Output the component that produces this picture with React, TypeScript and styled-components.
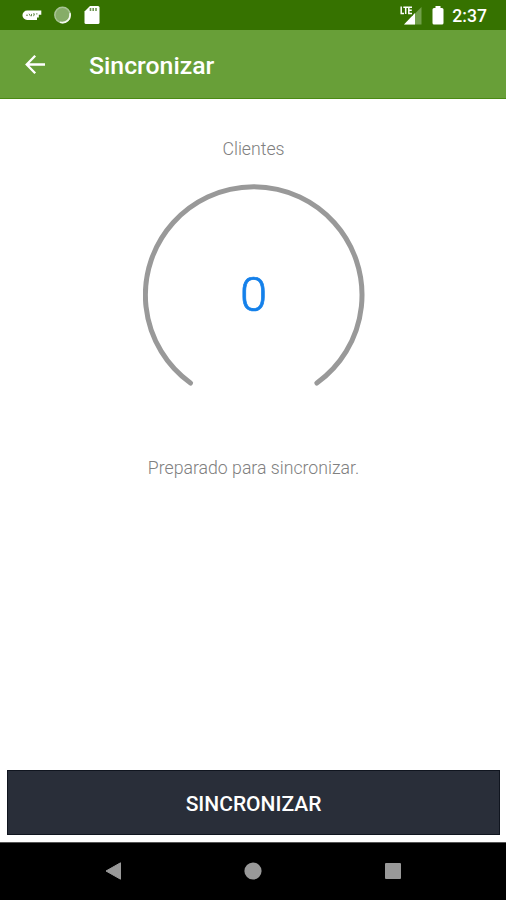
import React from "react";
import styled, { createGlobalStyle } from "styled-components";

const GlobalStyle = createGlobalStyle`
  *, *::before, *::after { box-sizing: border-box; }
  body { margin: 0; background: #fff; font-family: Roboto, "Liberation Sans", sans-serif; }
`;

const Screen = styled.div`
  display: flex;
  flex-direction: column;
  width: 506px;
  height: 900px;
  overflow: hidden;
  background: #fff;
`;

const StatusBar = styled.header`
  display: flex;
  align-items: center;
  justify-content: space-between;
  flex: none;
  height: 30px;
  padding: 0 19px 0 22px;
  background: #367200;
  color: #fff;
`;

const StatusGroup = styled.div<{ $gap: number }>`
  display: flex;
  align-items: center;
  gap: ${(p) => p.$gap}px;
`;

const Clock = styled.span`
  margin-left: -2px;
  padding-top: 2px;
  font-size: 17.6px;
  font-weight: 500;
  line-height: 28px;
`;

const AppBar = styled.div`
  display: flex;
  align-items: center;
  flex: none;
  height: 69px;
  padding: 0 24px;
  gap: 43px;
  background: #689f38;
  border-bottom: 1px solid #4a8a14;
  color: #fff;
`;

const BackButton = styled.button`
  display: flex;
  padding: 0;
  border: 0;
  background: none;
  color: inherit;
`;

const Title = styled.h1`
  margin: 4px 0 0;
  font-size: 24.8px;
  font-weight: 500;
  line-height: 28px;
`;

const Content = styled.main`
  display: flex;
  flex-direction: column;
  align-items: center;
  flex: 1;
  padding: 39px 6px 7px 7px;
`;

const Label = styled.p`
  margin: 0;
  color: #808080;
  font-size: 17.7px;
  font-weight: 300;
  line-height: 22px;
`;

const Gauge = styled.div`
  display: grid;
  place-items: center;
  width: 222px;
  height: 222px;
  margin: 24px 0 51px;
  > * { grid-area: 1 / 1; }
`;

const Count = styled.span`
  color: #1480ea;
  font-size: 49px;
  font-weight: 300;
  line-height: 56px;
  -webkit-text-stroke: 0.7px currentColor;
`;

const SyncButton = styled.button`
  width: 100%;
  height: 65px;
  margin-top: auto;
  padding: 2px 0 0;
  border: 1px solid #10151f;
  background: #292e39;
  color: #fff;
  font: 500 21px Roboto, "Liberation Sans", sans-serif;
`;

const NavBar = styled.nav`
  display: grid;
  grid-template-columns: repeat(3, 140px);
  justify-content: center;
  align-items: center;
  justify-items: center;
  flex: none;
  height: 58px;
  padding-bottom: 2px;
  border-top: 1px solid #555;
  background: #000;
`;

const KeyIcon = () => (
  <svg width="20" height="16" viewBox="0 0 20 16">
    <path d="M5.2 3.5H19.3V7.8H16.8V10.5H15V13H5.2A4.7 4.7 0 0 1 5.2 3.5Z" fill="#fff" />
    <path d="M4 8.2H6M7 6.7L8.5 9.2M9.5 6.9V9.2M11 6.9H12.5L11.5 9.2M14 6.9H15.5" stroke="#6a8e50" strokeWidth="1" fill="none" />
  </svg>
);

const SpinnerIcon = () => (
  <svg width="18" height="18" viewBox="0 0 18 18">
    <circle cx="8.5" cy="9" r="7.7" fill="#86ad68" stroke="#a8c495" strokeWidth="1.5" />
    <path d="M15.9 7.2A7.7 7.7 0 0 1 6 16.2" fill="none" stroke="#f5faf0" strokeWidth="1.7" />
  </svg>
);

const CardIcon = () => (
  <svg width="16" height="20" viewBox="0 0 16 20">
    <path d="M6 1H14Q15.5 1 15.5 2.5V17.5Q15.5 19 14 19H2Q.5 19 .5 17.5V6.5Z" fill="#fff" />
    <path d="M6.5 3V6M9.2 3V6M12 3V6" stroke="#6d9550" strokeWidth="1.6" />
  </svg>
);

const SignalIcon = () => (
  <svg width="23" height="20" viewBox="0 0 23 20">
    <path d="M22.5 2V19.5H5Z" fill="#72a04b" />
    <path d="M16 8V19.5H5Z" fill="#fff" />
    <path d="M0 0H13.5V11H0Z" fill="#367200" />
    <path d="M2.2 1.5V8.5H5M4.3 2.2H9M6.7 2.2V9.1M13 2.2H9.8V8.5H13M9.8 5.3H12.8" fill="none" stroke="#fff" strokeWidth="1.5" />
  </svg>
);

const BatteryIcon = () => (
  <svg width="12" height="20" viewBox="0 0 12 20">
    <path d="M3.5 1H8.5V3H10Q11.5 3 11.5 4.5V18Q11.5 19.5 10 19.5H2Q.5 19.5 .5 18V4.5Q.5 3 2 3H3.5Z" fill="#fff" />
  </svg>
);

export default function App() {
  return (
    <Screen>
      <GlobalStyle />
      <StatusBar>
        <StatusGroup $gap={12}>
          <KeyIcon />
          <SpinnerIcon />
          <CardIcon />
        </StatusGroup>
        <StatusGroup $gap={10}>
          <SignalIcon />
          <BatteryIcon />
          <Clock>2:37</Clock>
        </StatusGroup>
      </StatusBar>
      <AppBar>
        <BackButton aria-label="Volver">
          <svg width="22" height="22" viewBox="0 0 22 22" fill="none" stroke="currentColor" strokeWidth="2.3">
            <path d="M21 11.5H3M11.2 2.7L2.7 11.5L11.2 20.3" />
          </svg>
        </BackButton>
        <Title>Sincronizar</Title>
      </AppBar>
      <Content>
        <Label>Clientes</Label>
        <Gauge>
          <svg width="222" height="222" viewBox="0 0 222 222">
            <path d="M47.5 199A108.3 108.3 0 1 1 173.9 199" fill="none" stroke="#999" strokeWidth="5" strokeLinecap="round" />
          </svg>
          <Count>0</Count>
        </Gauge>
        <Label>Preparado para sincronizar.</Label>
        <SyncButton>SINCRONIZAR</SyncButton>
      </Content>
      <NavBar>
        <svg width="18" height="20" viewBox="0 0 18 20"><path d="M2 10L16.5 1.8V18.2Z" fill="#999" stroke="#999" strokeLinejoin="round" /></svg>
        <svg width="20" height="20" viewBox="0 0 20 20"><circle cx="10" cy="10" r="8.6" fill="#999" /></svg>
        <svg width="18" height="18" viewBox="0 0 18 18"><rect x="1" y="1" width="16" height="16" rx="1" fill="#999" /></svg>
      </NavBar>
    </Screen>
  );
}
